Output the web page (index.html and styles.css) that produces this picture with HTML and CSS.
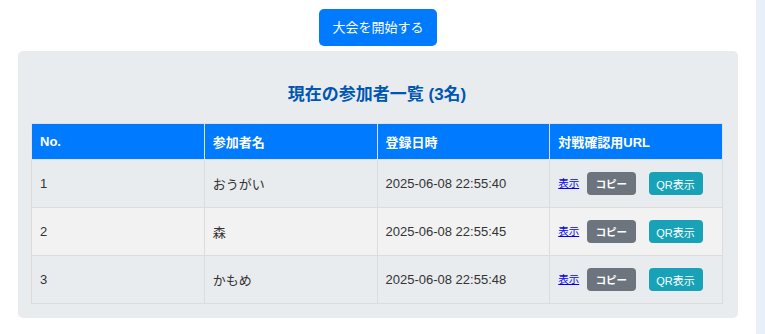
FILE: index.html
```html
<!DOCTYPE html>
<html lang="ja">
<head>
    <meta charset="UTF-8">
    <meta name="viewport" content="width=device-width, initial-scale=1.0">
    <title>大会管理</title>
    <link rel="stylesheet" href="styles.css">
</head>
<body>
    <div class="page">
        <div class="main">
            <div class="actions">
                <button class="start-btn">大会を開始する</button>
            </div>

            <div class="participants">
                <h3>現在の参加者一覧 (3名)</h3>
                <table class="list">
                    <thead>
                        <tr>
                            <th>No.</th>
                            <th>参加者名</th>
                            <th>登録日時</th>
                            <th>対戦確認用URL</th>
                        </tr>
                    </thead>
                    <tbody>
                        <tr>
                            <td>1</td>
                            <td>おうがい</td>
                            <td>2025-06-08 22:55:40</td>
                            <td class="url-cell">
                                <a href="#" class="view-link">表示</a>
                                <button class="btn-copy">コピー</button>
                                <button class="btn-qr">QR表示</button>
                            </td>
                        </tr>
                        <tr>
                            <td>2</td>
                            <td>森</td>
                            <td>2025-06-08 22:55:45</td>
                            <td class="url-cell">
                                <a href="#" class="view-link">表示</a>
                                <button class="btn-copy">コピー</button>
                                <button class="btn-qr">QR表示</button>
                            </td>
                        </tr>
                        <tr>
                            <td>3</td>
                            <td>かもめ</td>
                            <td>2025-06-08 22:55:48</td>
                            <td class="url-cell">
                                <a href="#" class="view-link">表示</a>
                                <button class="btn-copy">コピー</button>
                                <button class="btn-qr">QR表示</button>
                            </td>
                        </tr>
                    </tbody>
                </table>
            </div>
        </div>
        <div class="side"></div>
    </div>
</body>
</html>
```

FILE: styles.css
```css
body {
    margin: 0;
    font-family: "Liberation Sans", "Noto Sans CJK JP", sans-serif;
    font-size: 13px;
    color: #333;
    background: #fff;
}
.page {
    display: flex;
    min-height: 334px;
}
.main {
    flex: 1;
    padding: 9px 18px 0;
}
.side {
    width: 9px;
    background: #e7eff9;
}
.actions {
    text-align: center;
    margin-bottom: 5px;
}
.start-btn {
    font-family: inherit;
    font-size: 13px;
    line-height: 17px;
    padding: 10px 13px;
    color: #fff;
    background: #007bff;
    border: none;
    border-radius: 5px;
}
.participants {
    background: #e9ecef;
    border-radius: 5px;
    padding: 13px 15px 14px 13px;
}
.participants h3 {
    margin: 19px 0 16px;
    text-align: center;
    font-size: 17px;
    line-height: 24px;
    color: #0056b3;
}
.list {
    width: 100%;
    table-layout: fixed;
    border-collapse: collapse;
}
.list th, .list td {
    border: 1px solid #dcdcdc;
    text-align: left;
    padding: 0 8px;
}
.list th {
    height: 35px;
    background: #007bff;
    color: #fff;
    font-weight: bold;
    border-color: #dee2e6;
}
.list td {
    height: 47px;
    vertical-align: middle;
}
.list tbody tr:nth-child(even) td {
    background: #f2f2f2;
}
.url-cell {
    padding-left: 7px;
}
.view-link {
    font-size: 10.5px;
    color: #0000ee;
    margin-right: 4px;
}
.btn-copy, .btn-qr {
    font-family: inherit;
    font-size: 10.5px;
    height: 23px;
    color: #fff;
    border: none;
    border-radius: 4px;
    vertical-align: middle;
}
.btn-copy {
    width: 49px;
    background: #6c757d;
    font-weight: bold;
    margin-right: 9px;
}
.btn-qr {
    width: 54px;
    background: #17a2b8;
    font-size: 11px;
}
```
